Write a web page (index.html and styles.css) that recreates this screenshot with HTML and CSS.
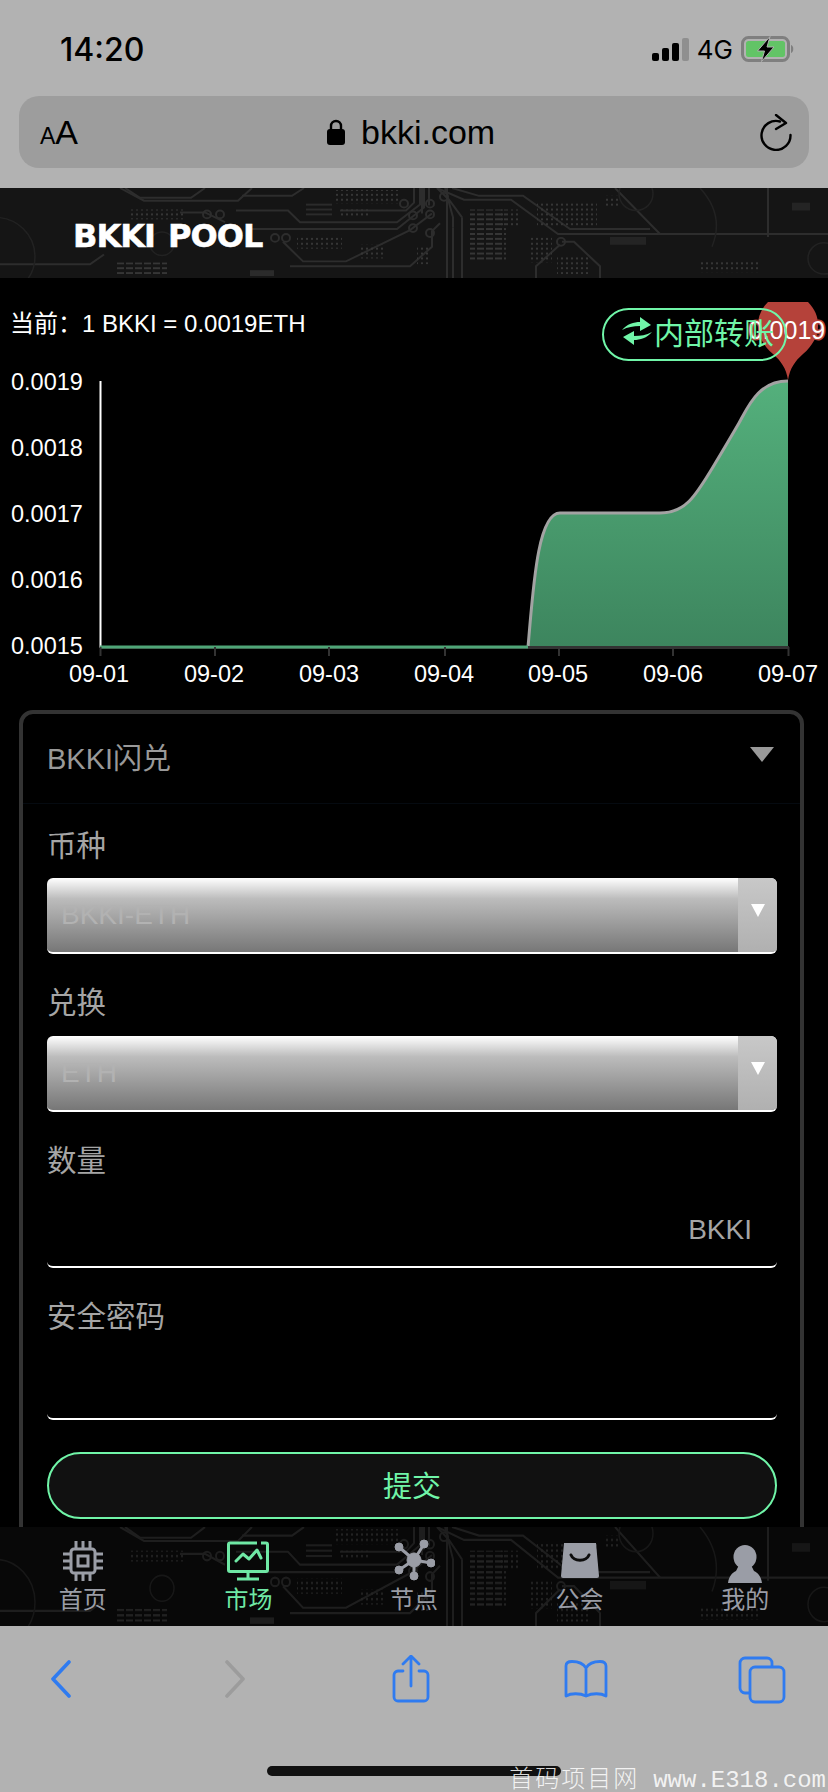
FILE: index.html
```html
<!DOCTYPE html>
<html lang="zh-CN">
<head>
    <meta charset="UTF-8">
    <meta name="viewport" content="width=device-width, initial-scale=1.0">
    <title>BKKI POOL</title>
    <link rel="stylesheet" href="styles.css">
</head>
<body>
    <svg class="defs" width="0" height="0">
        <defs>
            <pattern id="dots" width="5" height="5" patternUnits="userSpaceOnUse">
                <rect x="1" y="1" width="2" height="2" fill="#363636"/>
            </pattern>
            <pattern id="dashes" width="9" height="5" patternUnits="userSpaceOnUse">
                <rect x="0" y="1" width="7" height="2" fill="#363636"/>
            </pattern>
            <linearGradient id="areaFill" x1="0" y1="0" x2="0" y2="1">
                <stop offset="0" stop-color="#54b07c"/>
                <stop offset="1" stop-color="#3d855e"/>
            </linearGradient>
            <symbol id="circuit" viewBox="0 0 828 92" preserveAspectRatio="none">
                <g fill="none" stroke="#2d2d2d" stroke-width="2">
                    <!-- left of the trunk -->
                    <path d="M120 0l24 13h94l14-13"/>
                    <path d="M205 0l-14 10H140L125 0"/>
                    <path d="M242 8h50l12-8"/>
                    <path d="M236 23h52l12 12h97l23-18V0"/>
                    <path d="M250 42h147l27-22V0"/>
                    <path d="M283 55l20 20h43l64-32 22-17"/>
                    <path d="M290 80h120l22-20V44l8-8"/>
                    <path d="M340 23h66l8-8V0"/>
                    <path d="M225 35l-20-10h-25"/>
                    <path d="M0 78h90l14-10"/>
                    <!-- trunk -->
                    <path d="M422 0v26M429 0v18M447 0v92M453 40v52M462 30v62"/>
                    <path d="M437 0l12 12 13 18M445 0l8 30v10"/>
                    <!-- right of the trunk -->
                    <path d="M437 0l27 12h47l47 35h100"/>
                    <path d="M452 0l27 8h44l47 34h80"/>
                    <path d="M562 55h12l26 25v12M560 58l-24 22v12"/>
                    <path d="M658 47h170"/>
                    <path d="M615 0l45 47M768 0v50"/>
                    <circle cx="404" cy="16" r="4"/>
                    <circle cx="413" cy="28" r="4"/>
                    <circle cx="413" cy="41" r="4"/>
                    <circle cx="430" cy="16" r="4"/>
                    <circle cx="430" cy="27" r="4"/>
                    <circle cx="430" cy="46" r="4"/>
                    <circle cx="444" cy="9" r="4"/>
                    <circle cx="275" cy="51" r="4"/>
                    <circle cx="286" cy="51" r="4"/>
                    <circle cx="207" cy="27" r="4"/>
                    <circle cx="220" cy="27" r="4"/>
                    <circle cx="561" cy="55" r="4"/>
                </g>
                <g fill="none" stroke="#222" stroke-width="1.500">
                    <circle cx="162" cy="57" r="12"/>
                    <circle cx="-5" cy="70" r="40"/>
                    <circle cx="636" cy="6" r="17"/>
                    <circle cx="824" cy="72" r="16"/>
                    <path d="M700 0c18 20 20 40 12 60"/>
                </g>
                <g fill="#2b2b2b">
                    <rect x="306" y="16" width="26" height="2"/>
                    <rect x="306" y="21" width="26" height="2"/>
                    <rect x="306" y="26" width="26" height="2"/>
                    <rect x="250" y="84" width="24" height="6"/>
                    <rect x="792" y="15" width="18" height="8" opacity=".7"/>
                    <rect x="610" y="50" width="36" height="8" opacity=".7"/>
                </g>
                <g fill="url(#dots)">
                    <rect x="128" y="22" width="55" height="10"/>
                    <rect x="335" y="2" width="65" height="14"/>
                    <rect x="340" y="22" width="28" height="8"/>
                    <rect x="297" y="48" width="45" height="14"/>
                    <rect x="360" y="58" width="24" height="14"/>
                    <rect x="500" y="22" width="20" height="18"/>
                    <rect x="537" y="14" width="60" height="26"/>
                    <rect x="530" y="50" width="22" height="26"/>
                    <rect x="557" y="70" width="34" height="18"/>
                    <rect x="417" y="60" width="14" height="18"/>
                    <rect x="605" y="8" width="14" height="12"/>
                    <rect x="700" y="74" width="60" height="12"/>
                </g>
                <g fill="url(#dashes)">
                    <rect x="470" y="22" width="36" height="52"/>
                    <rect x="115" y="76" width="52" height="12"/>
                </g>
            </symbol>
        </defs>
    </svg>

    <div class="browser-top">
        <div class="status-bar">
            <span class="clock">14:20</span>
            <div class="status-right">
                <div class="signal"><i></i><i></i><i></i><i class="off"></i></div>
                <span class="net">4G</span>
                <svg class="battery" width="54" height="26" viewBox="0 0 54 26">
                    <rect x="1.5" y="1.5" width="46" height="23" rx="6" fill="none" stroke="#7f7f7f" stroke-width="3"/>
                    <rect x="5" y="5" width="39" height="16" rx="2.5" fill="#62c466"/>
                    <path d="M50 9c3 .5 3 7.500 0 8z" fill="#7f7f7f"/>
                    <path d="M29 .5L16.500 15h7l-3 10.500L33 11h-7z" fill="#000" stroke="#b2b2b2" stroke-width="1"/>
                </svg>
            </div>
        </div>
        <div class="url-bar">
            <span class="aa"><small>A</small>A</span>
            <div class="url">
                <svg width="18" height="26" viewBox="0 0 18 26">
                    <path d="M4 11V7a5 5 0 0 1 10 0v4" fill="none" stroke="#000" stroke-width="2.400"/>
                    <rect y="10" width="18" height="16" rx="3"/>
                </svg>
                <span>bkki.com</span>
            </div>
            <svg class="reload" width="32" height="37" viewBox="0 0 32 37" fill="none" stroke="#000" stroke-width="2.400" stroke-linecap="round" stroke-linejoin="round">
                <path d="M20 7.500A14.500 14.500 0 1 0 30.500 21"/>
                <path d="M16 1l10 8-10 6"/>
            </svg>
        </div>
    </div>

    <header class="site-header">
        <svg class="circuit-bg" aria-hidden="true"><use href="#circuit" width="100%" height="100%"/></svg>
        <div class="logo">BKKI POOL</div>
    </header>

    <main class="page">
        <div class="rate">当前：1 BKKI = 0.0019ETH</div>

        <div class="chart-wrap">
            <svg class="chart" width="828" height="402" viewBox="0 0 828 402">
                <!-- svg top is 302 in the page -->
                <path d="M100 345H528C533 290 537 211 560 211H660C685 211 695 195 713 165C722 150 728 140 739 121C748 105 758 79 788 79V345Z" fill="url(#areaFill)"/>
                <path d="M528 345C533 290 537 211 560 211H660C685 211 695 195 713 165C722 150 728 140 739 121C748 105 758 79 788 79" fill="none" stroke="#a3a3a3" stroke-width="3"/>
                <path d="M100.500 79V346" stroke="#fff" stroke-width="2"/>
                <path d="M100 345.500H789" stroke="#333" stroke-width="3"/>
                <path d="M100 345H528" stroke="#4fa577" stroke-width="3"/>
                <path d="M100.500 345v9M215 345v9M329 345v9M445 345v9M559 345v9M673 345v9M788.500 345v9" stroke="#333" stroke-width="2"/>
                <path d="M768 0H808C824 16 820 38 803 52C795 59 790 66 788 78C786 66 781 59 773 52C756 38 752 16 768 0Z" fill="#b5423a"/>
                <text class="pin-label" x="787" y="37">0.0019</text>
                <g class="axis-y">
                    <text x="11" y="88">0.0019</text>
                    <text x="11" y="154">0.0018</text>
                    <text x="11" y="220">0.0017</text>
                    <text x="11" y="286">0.0016</text>
                    <text x="11" y="352">0.0015</text>
                </g>
                <g class="axis-x">
                    <text x="99" y="380">09-01</text>
                    <text x="214" y="380">09-02</text>
                    <text x="329" y="380">09-03</text>
                    <text x="444" y="380">09-04</text>
                    <text x="558" y="380">09-05</text>
                    <text x="673" y="380">09-06</text>
                    <text x="788" y="380">09-07</text>
                </g>
            </svg>
            <a class="transfer-btn">
                <svg width="30" height="28" viewBox="0 0 30 28">
                    <path d="M0 13C5 7 12 5 18 5V0l11 8-11 6V9C11 9 6 10 0 13Z" fill="#70f5a8"/>
                    <path d="M30 15C25 21 18 23 12 23v5L1 20l11-6v5c7 0 12-1 18-4Z" fill="#70f5a8"/>
                </svg>
                内部转账
            </a>
        </div>

        <section class="card">
            <div class="card-head">
                <span>BKKI闪兑</span>
                <i class="caret"></i>
            </div>
            <div class="card-body">
                <label class="field-label">币种</label>
                <div class="select"><span>BKKI-ETH</span><b><i></i></b></div>
                <label class="field-label">兑换</label>
                <div class="select"><span>ETH</span><b><i></i></b></div>
                <label class="field-label">数量</label>
                <div class="input"><span>BKKI</span></div>
                <label class="field-label">安全密码</label>
                <div class="input short"></div>
                <button class="submit">提交</button>
            </div>
        </section>
    </main>

    <nav class="tabbar">
        <svg class="circuit-bg" aria-hidden="true"><use href="#circuit" width="100%" height="100%"/></svg>
        <a class="tab">
            <svg width="40" height="40" viewBox="0 0 40 40" fill="none" stroke="#9a9da6" stroke-width="3">
                <rect x="8" y="8" width="24" height="24" rx="3"/>
                <rect x="15" y="15" width="10" height="10" stroke-width="3"/>
                <path d="M13 0v7M20 0v7M27 0v7M13 33v7M20 33v7M27 33v7M0 13h7M0 20h7M0 27h7M33 13h7M33 20h7M33 27h7"/>
            </svg>
            <span>首页</span>
        </a>
        <a class="tab active">
            <svg width="42" height="40" viewBox="0 0 42 40" fill="none" stroke="#6fe8a5" stroke-width="3">
                <path d="M34 2h5a1.500 1.500 0 0 1 1.500 1.500V29a1.500 1.500 0 0 1-1.500 1.500H3A1.500 1.500 0 0 1 1.500 29V3.500A1.500 1.500 0 0 1 3 2h27"/>
                <path d="M9 20l7-7 6 5 8-9 4 8" stroke-linejoin="round" stroke-linecap="round"/>
                <path d="M21 31v7M10 38h22"/>
            </svg>
            <span>市场</span>
        </a>
        <a class="tab">
            <svg class="icon-node" width="42" height="42" viewBox="0 0 42 42" fill="#9a9da6" stroke="#9a9da6">
                <path d="M21 21L6 8M21 21L31 5M21 21L38 24M21 21L6 31M21 21V36" stroke-width="3"/>
                <circle cx="21" cy="21" r="7"/>
                <circle cx="6" cy="8" r="4"/>
                <circle cx="31" cy="5" r="4"/>
                <circle cx="38" cy="24" r="4"/>
                <circle cx="6" cy="31" r="4"/>
                <circle cx="21" cy="37" r="4"/>
            </svg>
            <span>节点</span>
        </a>
        <a class="tab">
            <svg class="icon-bag" width="38" height="36" viewBox="0 0 38 36">
                <path d="M3 1H35L38 34a2 2 0 0 1-2 2H2a2 2 0 0 1-2-2Z" fill="#9a9da6"/>
                <path d="M10 13c3 7 15 7 18 0" fill="none" stroke="#0d0d0d" stroke-width="3" stroke-linecap="round"/>
            </svg>
            <span>公会</span>
        </a>
        <a class="tab">
            <svg class="icon-user" width="34" height="38" viewBox="0 0 34 38" fill="#9a9da6">
                <ellipse cx="17" cy="12" rx="11.500" ry="12"/>
                <path d="M11 20h12l3 6c4 2 7 5 8 12H0c1-7 4-10 8-12Z"/>
            </svg>
            <span>我的</span>
        </a>
    </nav>

    <footer class="browser-bottom">
        <div class="toolbar">
            <svg class="tool back" width="22" height="38" viewBox="0 0 22 38"><path d="M19 2L3 19l16 17" fill="none" stroke="#2f7bf0" stroke-width="3.600" stroke-linecap="round" stroke-linejoin="round"/></svg>
            <svg class="tool forward" width="22" height="38" viewBox="0 0 22 38"><path d="M3 2l16 17L3 36" fill="none" stroke="#9c9c9c" stroke-width="3.600" stroke-linecap="round" stroke-linejoin="round"/></svg>
            <svg class="tool share" width="38" height="48" viewBox="0 0 38 48" fill="none" stroke="#2f7bf0" stroke-width="2.800" stroke-linecap="round" stroke-linejoin="round">
                <path d="M11 16H6a4 4 0 0 0-4 4v22a4 4 0 0 0 4 4h26a4 4 0 0 0 4-4V20a4 4 0 0 0-4-4h-5"/>
                <path d="M19 31V2M11 9l8-8 8 8"/>
            </svg>
            <svg class="tool book" width="44" height="38" viewBox="0 0 44 38" fill="none" stroke="#2f7bf0" stroke-width="2.800" stroke-linecap="round" stroke-linejoin="round">
                <path d="M22 8C19 3 14 1.500 8 1.500 4 1.500 2 3 2 6v30c5-3 14-3 20 0 6-3 15-3 20 0V6c0-3-2-4.500-6-4.500C30 1.500 25 3 22 8ZM22 8v27"/>
            </svg>
            <svg class="tool tabs" width="48" height="48" viewBox="0 0 48 48" fill="none" stroke="#2f7bf0" stroke-width="2.800">
                <path d="M11 37H7a5 5 0 0 1-5-5V7a5 5 0 0 1 5-5h22a5 5 0 0 1 5 5v4"/>
                <rect x="12" y="11" width="34" height="35" rx="5"/>
            </svg>
        </div>
        <div class="home-bar"></div>
        <div class="watermark"><span class="wm-cn">首码项目网</span><span class="wm-en">www.E318.com</span></div>
    </footer>
</body>
</html>
```

FILE: styles.css
```css
* {
    box-sizing: border-box;
}
body {
    margin: 0;
    width: 828px;
    height: 1792px;
    overflow: hidden;
    display: flex;
    flex-direction: column;
    background-color: #000;
    font-family: "Liberation Sans", "Noto Sans CJK SC", sans-serif;
}
.defs {
    position: absolute;
}

/* safari top */
.browser-top {
    height: 188px;
    background-color: #b2b2b2;
    padding: 0 19px;
}
.status-bar {
    height: 96px;
    padding: 2px 14px 0 41px;
    display: flex;
    justify-content: space-between;
    align-items: center;
}
.clock {
    font-family: Inter, sans-serif;
    font-size: 32px;
    font-weight: 500;
    color: #000;
}
.status-right {
    display: flex;
    align-items: center;
}
.signal {
    display: flex;
    align-items: flex-end;
    gap: 3px;
    height: 24px;
    margin-right: 8px;
}
.signal i {
    width: 7px;
    background-color: #000;
    border-radius: 2px;
    height: 8px;
}
.signal i:nth-child(2) {
    height: 13px;
}
.signal i:nth-child(3) {
    height: 18px;
}
.signal i.off {
    height: 23px;
    background-color: #8f8f8f;
}
.net {
    font-family: Inter, sans-serif;
    font-size: 26px;
    color: #000;
    margin-right: 8px;
}
.url-bar {
    height: 72px;
    background-color: #9d9d9d;
    border-radius: 20px;
    padding: 0 17px 0 21px;
    display: flex;
    align-items: center;
    justify-content: space-between;
    position: relative;
}
.aa {
    font-size: 34px;
    color: #000;
    width: 37px;
    white-space: nowrap;
}
.aa small {
    font-size: 23px;
}
.url {
    position: absolute;
    left: 308px;
    display: flex;
    align-items: center;
    gap: 16px;
    font-size: 34px;
    color: #000;
}

/* header */
.site-header {
    height: 90px;
    background-color: #151515;
    position: relative;
    padding: 30px 0 0 73px;
    overflow: hidden;
}
.circuit-bg {
    position: absolute;
    left: 0;
    top: 0;
    width: 100%;
    height: 100%;
}
.logo {
    position: relative;
    font-family: "DejaVu Sans", sans-serif;
    font-size: 32px;
    font-weight: bold;
    line-height: 36px;
    color: #fff;
    letter-spacing: -1px;
    word-spacing: 3px;
    -webkit-text-stroke: 0.5px #fff;
    white-space: nowrap;
}

/* main */
.page {
    flex: 1;
    min-height: 0;
    overflow: hidden;
    background-color: #000;
    position: relative;
}
.rate {
    height: 24px;
    margin-top: 34px;
    padding-left: 10px;
    font-size: 24px;
    line-height: 24px;
    color: #fff;
    white-space: nowrap;
}
.chart-wrap {
    height: 408px;
    position: relative;
    margin-top: -34px;
}
.chart {
    display: block;
}
.chart text {
    font-family: "Liberation Sans", sans-serif;
    font-size: 23.500px;
    fill: #fff;
}
.axis-x text {
    text-anchor: middle;
}
.chart .pin-label {
    text-anchor: middle;
    font-size: 25px;
    stroke: #b5423a;
    stroke-width: 3px;
    paint-order: stroke;
}
.transfer-btn {
    position: absolute;
    left: 602px;
    top: 6px;
    width: 185px;
    height: 53px;
    border: 2px solid #70f5a8;
    border-radius: 27px;
    padding: 0 0 8px 18px;
    display: flex;
    align-items: center;
    gap: 2px;
    font-size: 30px;
    color: #70f5a8;
    white-space: nowrap;
}

.card {
    margin: 0 24px 0 19px;
    height: 900px;
    border: 4px solid #333;
    border-radius: 14px;
    background-color: #000;
}
.card-head {
    height: 90px;
    padding: 0 26px 6px 24px;
    border-bottom: 1px solid #050a10;
    display: flex;
    align-items: center;
    justify-content: space-between;
    font-size: 29px;
    color: #999;
}
.caret {
    width: 0;
    height: 0;
    margin-top: -3px;
    border-left: 12px solid transparent;
    border-right: 12px solid transparent;
    border-top: 15px solid #999;
}
.card-body {
    padding: 0 23px 0 24px;
}
.field-label {
    display: block;
    height: 74px;
    padding-top: 24px;
    font-size: 29.500px;
    line-height: 36px;
    color: #a5a5a5;
}
.select {
    height: 76px;
    border-radius: 6px;
    border-bottom: 2px solid #fff;
    background: linear-gradient(#fff 0%, #bcbcbc 28%, #777 100%);
    display: flex;
    justify-content: space-between;
    overflow: hidden;
}
.select span {
    padding: 20px 0 0 14px;
    font-size: 28px;
    line-height: 34px;
    color: #b2b2b2;
}
.select b {
    width: 39px;
    background: linear-gradient(#c8c8c8, #b0b0b0);
    display: flex;
    justify-content: center;
    padding-top: 26px;
}
.select b i {
    width: 0;
    height: 0;
    border-left: 7px solid transparent;
    border-right: 7px solid transparent;
    border-top: 13px solid #fff;
}
.select + .field-label,
.input + .field-label {
    height: 82px;
    padding-top: 31px;
}
.input {
    height: 74px;
    background-color: #000;
    border-bottom: 2px solid #fff;
    border-radius: 6px;
    display: flex;
    justify-content: flex-end;
    align-items: center;
    padding-right: 25px;
    font-size: 28px;
    color: #a5a5a5;
}
.input.short {
    height: 70px;
}
.submit {
    display: block;
    width: 100%;
    height: 67px;
    margin-top: 32px;
    padding-bottom: 4px;
    border: 2px solid #70f5a8;
    border-radius: 34px;
    background-color: #111;
    color: #70f5a8;
    font-family: inherit;
    font-size: 29px;
}

/* bottom nav */
.tabbar {
    height: 99px;
    background-color: #080808;
    position: relative;
    display: flex;
    overflow: hidden;
}
.tabbar .circuit-bg {
    opacity: 0.6;
}
.tab {
    position: relative;
    flex: 1;
    height: 99px;
    padding-top: 14px;
    display: flex;
    flex-direction: column;
    align-items: center;
    font-size: 24px;
    color: #9a9da6;
}
.icon-node {
    margin-top: -2px;
}
.icon-bag {
    margin-top: 1px;
}
.icon-user {
    margin-top: 4px;
}
.tab span {
    position: absolute;
    top: 58px;
    line-height: 30px;
}
.tab.active {
    color: #6fe8a5;
}

/* safari bottom */
.browser-bottom {
    height: 166px;
    background-color: #b2b2b2;
    position: relative;
}
.toolbar {
    height: 100px;
    display: flex;
    align-items: flex-start;
}
.tool {
    flex: none;
    margin-top: 34px;
}
.back {
    margin-left: 50px;
}
.forward {
    margin-left: 152px;
}
.share {
    margin-left: 146px;
    margin-top: 29px;
}
.book {
    margin-left: 134px;
}
.tabs {
    margin-left: 130px;
    margin-top: 30px;
}
.home-bar {
    width: 294px;
    height: 10px;
    margin: 40px 0 0 267px;
    background-color: #111;
    border-radius: 5px;
}
.watermark {
    position: absolute;
    right: 2px;
    bottom: -3px;
    display: flex;
    align-items: baseline;
    line-height: 28px;
    color: rgba(255, 255, 255, 0.85);
    white-space: nowrap;
}
.wm-cn {
    font-family: "Noto Sans CJK SC", serif;
    font-size: 24px;
    font-weight: 300;
    letter-spacing: 2px;
}
.wm-en {
    margin-left: 14px;
    font-family: "Liberation Mono", monospace;
    font-size: 24px;
}
```
